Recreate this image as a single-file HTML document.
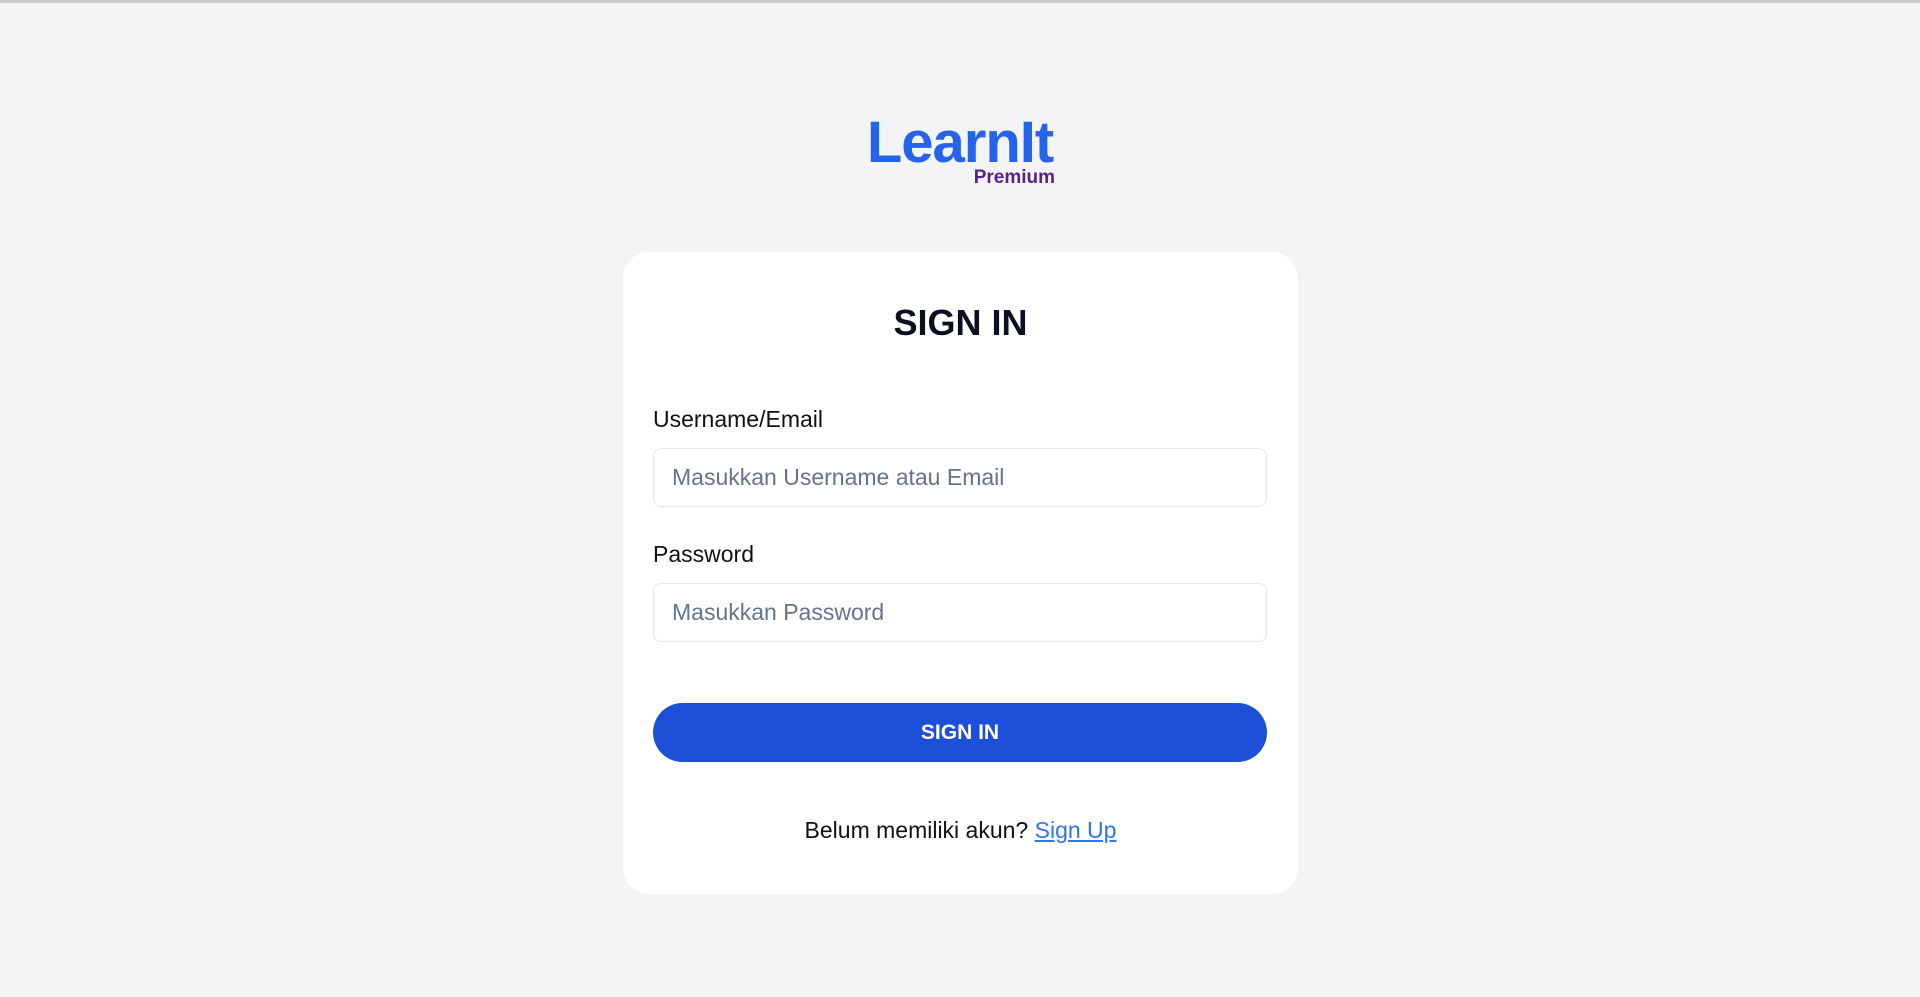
<!DOCTYPE html>
<html><head><meta charset="utf-8"><style>
html,body{margin:0;padding:0}
body{width:1920px;height:997px;background:#f3f4f6;font-family:"Liberation Sans",sans-serif;position:relative;overflow:hidden}
.abs{position:absolute}
.top{left:0;top:0;width:1920px;height:3px;background:#c9cacc}
.logo{left:0;width:1920px;top:108px;text-align:center;font-weight:bold;font-size:58px;color:#2563eb;letter-spacing:-1px;line-height:70px}
.prem{left:960px;width:95px;text-align:right;top:167px;font-weight:bold;font-size:19px;color:#5b2187}
.card{left:623px;top:252px;width:675px;height:642px;background:#fff;border-radius:26px}
.h{left:0;width:675px;text-align:center;top:46px;font-weight:bold;font-size:36px;color:#0b1020;line-height:50px}
.lab{left:30px;font-size:23px;color:#111;line-height:30px}
.inp{left:30px;width:614px;height:59px;box-sizing:border-box;border:1px solid #e2e8f0;border-radius:8px;font-size:23px;color:#64748b;line-height:57px;padding-left:18px}
.btn{left:30px;width:614px;height:59px;border-radius:30px;background:#1e4fd8;color:#fff;font-weight:bold;font-size:21px;text-align:center;line-height:59px}
.ft{left:0;width:675px;text-align:center;top:563px;font-size:23px;color:#111;line-height:30px}
.ft span{color:#2f74f0;text-decoration:underline}
</style></head><body>
<div class="abs top"></div>
<div class="abs logo">LearnIt</div>
<div class="abs prem">Premium</div>
<div class="abs card">
<div class="abs h">SIGN IN</div>
<div class="abs lab" style="top:152px">Username/Email</div>
<div class="abs inp" style="top:196px">Masukkan Username atau Email</div>
<div class="abs lab" style="top:287px">Password</div>
<div class="abs inp" style="top:331px">Masukkan Password</div>
<div class="abs btn" style="top:451px">SIGN IN</div>
<div class="abs ft">Belum memiliki akun? <span>Sign Up</span></div>
</div>
</body></html>
